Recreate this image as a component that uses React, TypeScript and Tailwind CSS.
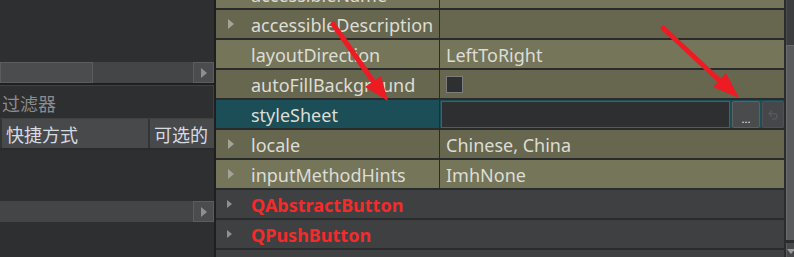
import { Undo2 } from "lucide-react"

type Tone = "light" | "dark" | "sel" | "group"

const rows: { label: string; value?: string; tone: Tone; arrow?: boolean; kind?: string }[] = [
  { label: "accessibleName", tone: "light", arrow: true },
  { label: "accessibleDescription", tone: "dark", arrow: true },
  { label: "layoutDirection", value: "LeftToRight", tone: "light" },
  { label: "autoFillBackground", tone: "dark", kind: "check" },
  { label: "styleSheet", tone: "sel", kind: "edit" },
  { label: "locale", value: "Chinese, China", tone: "dark", arrow: true },
  { label: "inputMethodHints", value: "ImhNone", tone: "light", arrow: true },
  { label: "QAbstractButton", tone: "group", arrow: true },
  { label: "QPushButton", tone: "group", arrow: true },
  { label: "", tone: "group" },
]

function HScroll({ handle }: { handle?: boolean }) {
  return (
    <div className="flex h-[21px] shrink-0 bg-[#444547]">
      {handle && <div className="w-[93px] border border-[#5c5d5f] bg-[#4b4c4e]" />}
      <div className="flex-1" />
      <div className="flex w-[21px] items-center justify-center border border-[#5c5d5f] bg-[#4b4c4e]">
        <span className="border-y-[5px] border-l-[6px] border-y-transparent border-l-[#8e8f91]" />
      </div>
    </div>
  )
}

function LeftPanel() {
  return (
    <div className="flex w-[214px] shrink-0 flex-col">
      <div className="h-[62px] shrink-0" />
      <HScroll handle />
      <div className="h-[2px] shrink-0 bg-[#1f2022]" />
      {/* filter box */}
      <div className="flex h-[34px] shrink-0 items-center border border-l-0 border-[#404143] pl-[2px] pt-[3px] text-[#8b8c8e]">
        过滤器
      </div>
      {/* header */}
      <div className="flex h-[31px] shrink-0 border-b-2 border-[#2a2b2d] bg-[#48494b] text-[#d6dbe2]">
        <div className="flex w-[150px] items-center border-l-2 border-r-2 border-[#333436] pl-[4px] pt-[3px]">快捷方式</div>
        <div className="flex flex-1 items-center pl-[4px] pt-[3px]">可选的</div>
      </div>
      <div className="flex-1" />
      <HScroll />
      <div className="h-[35px] shrink-0" />
    </div>
  )
}

function Row({ label, value, tone, arrow, kind }: (typeof rows)[number]) {
  const bg =
    tone === "light" ? "bg-[#75755a]" : tone === "dark" ? "bg-[#67674f]" : tone === "sel" ? "bg-[#1b4e57]" : "bg-[#3f4042]"

  if (tone === "group") {
    return (
      <div className={`flex h-[30px] shrink-0 items-center border-b-2 border-[#2a2b2c] ${bg}`}>
        <span className="flex w-[35px] shrink-0 pl-[11px]">
          {arrow && <span className="border-y-[4px] border-l-[5px] border-y-transparent border-l-[#8f9092]" />}
        </span>
        <span className="pt-[2px] font-bold text-[#f42b2b]">{label}</span>
      </div>
    )
  }

  return (
    <div className={`flex h-[30px] shrink-0 border-b-2 border-[#2a2b2c] text-[#dcddd5] ${bg}`}>
      <div className="flex w-[223px] shrink-0 items-center">
        <span className="flex w-[35px] shrink-0 pl-[12px]">
          {arrow && <span className="border-y-[5px] border-l-[6px] border-y-transparent border-l-[#a3a39a]" />}
        </span>
        <span className="pt-[2px]">{label}</span>
      </div>
      <div className="w-px shrink-0 bg-[#2a2b2c]" />
      {kind === "edit" ? (
        <div className="flex flex-1 gap-[2px] pl-px pt-px">
          <div className="flex-1 border border-[#2d6a72] bg-[#2e2f31]" />
          <div className="flex w-[28px] items-end justify-center rounded-[2px] border border-[#5f6062] bg-[#4a4b4d] pb-[3px] text-[11px] leading-none text-[#e6e6e6]">
            ...
          </div>
          <div className="flex w-[22px] items-center justify-center rounded-[2px] border border-[#505153] bg-[#46474a]">
            <Undo2 size={12} color="#58595c" strokeWidth={2.5} />
          </div>
        </div>
      ) : (
        <div className="flex flex-1 items-center pl-[6px]">
          {kind === "check" ? (
            <span className="h-[17px] w-[17px] border border-[#7d7d7b] bg-[#2e2f31]" />
          ) : (
            <span className="pt-[2px]">{value}</span>
          )}
        </div>
      )}
    </div>
  )
}

function VScroll() {
  return (
    <div className="flex w-[8px] shrink-0 flex-col bg-[#2b2c2e]">
      <div className="h-[45px] shrink-0 border-l border-[#4a4b4d] bg-[#3c3d3f]" />
      <div className="h-[195px] shrink-0 border-l border-t border-[#6a6b6d] bg-[#5a5b5d]" />
      <div className="h-[3px] shrink-0" />
      <div className="flex flex-1 justify-center border-l border-[#5a5b5d] bg-[#47484a] pt-[6px]">
        <span className="h-0 border-x-[4px] border-t-[5px] border-x-transparent border-t-[#9a9b9d]" />
      </div>
    </div>
  )
}

function Arrows() {
  return (
    <svg className="pointer-events-none absolute inset-0" width={794} height={257}>
      <line x1={333} y1={24} x2={373} y2={81} stroke="#ed1c24" strokeWidth={5} strokeLinecap="round" />
      <polygon points="388,101 381,76 365,87" fill="#ed1c24" />
      <line x1={663} y1={28} x2={720} y2={81} stroke="#ed1c24" strokeWidth={5} strokeLinecap="round" />
      <polygon points="739,98 726,73 713,87" fill="#ed1c24" />
    </svg>
  )
}

export default function App() {
  return (
    <div className="relative flex h-[257px] w-[794px] overflow-hidden bg-[#2e2f31] font-['Noto_Sans','Noto_Sans_CJK_SC',sans-serif] text-[18px] leading-none">
      <LeftPanel />
      <div className="w-[2px] shrink-0 bg-[#1e1f21]" />
      <div className="flex w-[568px] shrink-0 flex-col overflow-hidden">
        <div className="-mt-[20px] flex flex-col">
          {rows.map((r, i) => (
            <Row key={i} {...r} />
          ))}
        </div>
      </div>
      <div className="w-[2px] shrink-0 bg-[#2b2c2e]" />
      <VScroll />
      <Arrows />
    </div>
  )
}
